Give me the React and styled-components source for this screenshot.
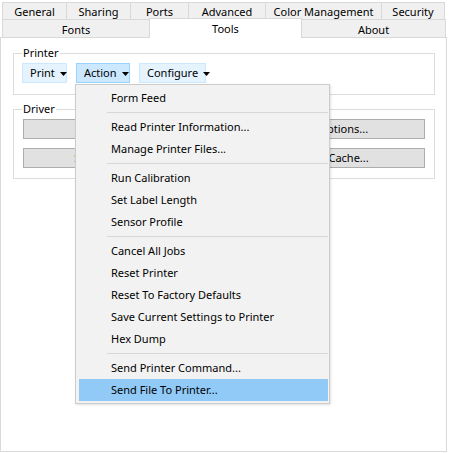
import React from "react";
import styled, { createGlobalStyle } from "styled-components";

const Global = createGlobalStyle`
  html, body { margin: 0; padding: 0; background: #ffffff; }
  body { font-family: "Noto Sans", "Liberation Sans", sans-serif; font-size: 11px; color: #000; }
  * { box-sizing: border-box; }
`;

const Window = styled.div`
  width: 449px;
  height: 453px;
  padding-top: 2px;
  background: #ffffff;
`;

const TabRow = styled.div`
  display: flex;
  padding-left: 2px;
  height: ${(p) => p.$h}px;
`;

const Tab = styled.div`
  width: ${(p) => p.$w}px;
  height: 100%;
  display: flex;
  align-items: center;
  justify-content: center;
  background: #f0f0f0;
  border-top: 1px solid #d9d9d9;
  border-left: ${(p) => (p.$noLeft ? "none" : "1px solid #d9d9d9")};
  border-right: ${(p) => (p.$right ? "1px solid #d9d9d9" : "none")};
  padding-top: 1px;
  white-space: nowrap;
`;

const ActiveTab = styled(Tab)`
  position: relative;
  z-index: 1;
  background: #ffffff;
  height: 20px;
  margin-top: -1px;
  align-items: flex-start;
  padding-top: 2px;
  border-right: 1px solid #d9d9d9;
`;

const Panel = styled.div`
  width: 447px;
  height: 415px;
  border: 1px solid #d9d9d9;
  background: #ffffff;
  padding: 15px 11px 0 12px;
  display: flex;
  flex-direction: column;
  gap: 14px;
`;

const Group = styled.div`
  position: relative;
  border: 1px solid #dcdcdc;
  padding: ${(p) => p.$pad};
`;

const GroupLabel = styled.span`
  position: absolute;
  left: 8px;
  top: -9px;
  padding: 0 1px;
  background: #ffffff;
  line-height: 16px;
`;

const ButtonBar = styled.div`
  display: flex;
  gap: 9px;
`;

const DropWrap = styled.div`
  position: relative;
`;

const DropButton = styled.div`
  width: ${(p) => p.$w}px;
  height: 20px;
  display: flex;
  align-items: center;
  gap: 5px;
  padding-left: 7px;
  background: ${(p) => (p.$open ? "#cce8ff" : "#e5f3ff")};
  border: 1px solid ${(p) => (p.$open ? "#99d1ff" : "#cce8ff")};
  line-height: 16px;
  padding-bottom: 1px;
`;

const Caret = styled.svg`
  width: 7px;
  height: 4px;
  flex: none;
  margin-top: 2px;
`;

const DriverGrid = styled.div`
  display: grid;
  grid-template-columns: 1fr 1fr;
  column-gap: 6px;
  row-gap: 9px;
`;

const PushButton = styled.div`
  height: 20px;
  background: #e1e1e1;
  border: 1px solid #adadad;
  display: flex;
  align-items: center;
  justify-content: center;
  white-space: nowrap;
  padding-bottom: 1px;
`;

const Menu = styled.div`
  position: absolute;
  left: -1px;
  top: 21px;
  width: 255px;
  background: #f2f2f2;
  border: 1px solid #cccccc;
  padding: 2px 1px 2px 3px;
  box-shadow: 1px 1px 2px rgba(0, 0, 0, 0.12);
  z-index: 5;
`;

const MenuItem = styled.div`
  height: 22px;
  display: flex;
  align-items: center;
  padding-left: 32px;
  padding-bottom: 1px;
  white-space: nowrap;
  background: ${(p) => (p.$hot ? "#91c9f7" : "transparent")};
`;

const Separator = styled.div`
  height: 7px;
  padding: 3px 0 0 28px;
  &::after {
    content: "";
    display: block;
    height: 1px;
    background: #d7d7d7;
  }
`;

const CaretIcon = () => (
  <Caret viewBox="0 0 7 4">
    <path d="M0 0 H7 L3.5 4 Z" fill="#000" />
  </Caret>
);

const menu = [
  ["Form Feed"],
  null,
  ["Read Printer Information..."],
  ["Manage Printer Files..."],
  null,
  ["Run Calibration"],
  ["Set Label Length"],
  ["Sensor Profile"],
  null,
  ["Cancel All Jobs"],
  ["Reset Printer"],
  ["Reset To Factory Defaults"],
  ["Save Current Settings to Printer"],
  ["Hex Dump"],
  null,
  ["Send Printer Command..."],
  ["Send File To Printer...", true],
];

export default function App() {
  return (
    <>
      <Global />
      <Window>
        <TabRow $h={17}>
          <Tab $w={64}>General</Tab>
          <Tab $w={64}>Sharing</Tab>
          <Tab $w={58}>Ports</Tab>
          <Tab $w={77}>Advanced</Tab>
          <Tab $w={116}>Color Management</Tab>
          <Tab $w={64} $right>Security</Tab>
        </TabRow>
        <TabRow $h={18}>
          <Tab $w={147}>Fonts</Tab>
          <ActiveTab $w={153}>Tools</ActiveTab>
          <Tab $w={144} $noLeft $right>About</Tab>
        </TabRow>
        <Panel>
          <Group $pad="9px 8px 11px 8px">
            <GroupLabel>Printer</GroupLabel>
            <ButtonBar>
              <DropButton $w={45}>Print<CaretIcon /></DropButton>
              <DropWrap>
                <DropButton $w={54} $open>Action<CaretIcon /></DropButton>
                <Menu>
                  {menu.map((m, i) =>
                    m ? (
                      <MenuItem key={i} $hot={m[1]}>{m[0]}</MenuItem>
                    ) : (
                      <Separator key={i} />
                    )
                  )}
                </Menu>
              </DropWrap>
              <DropButton $w={67}>Configure<CaretIcon /></DropButton>
            </ButtonBar>
          </Group>
          <Group $pad="9px 9px 10px 9px">
            <GroupLabel>Driver</GroupLabel>
            <DriverGrid>
              <PushButton>Preferences...</PushButton>
              <PushButton>Driver Options...</PushButton>
              <PushButton>Set Default Printer</PushButton>
              <PushButton>Clear All Cache...</PushButton>
            </DriverGrid>
          </Group>
        </Panel>
      </Window>
    </>
  );
}
